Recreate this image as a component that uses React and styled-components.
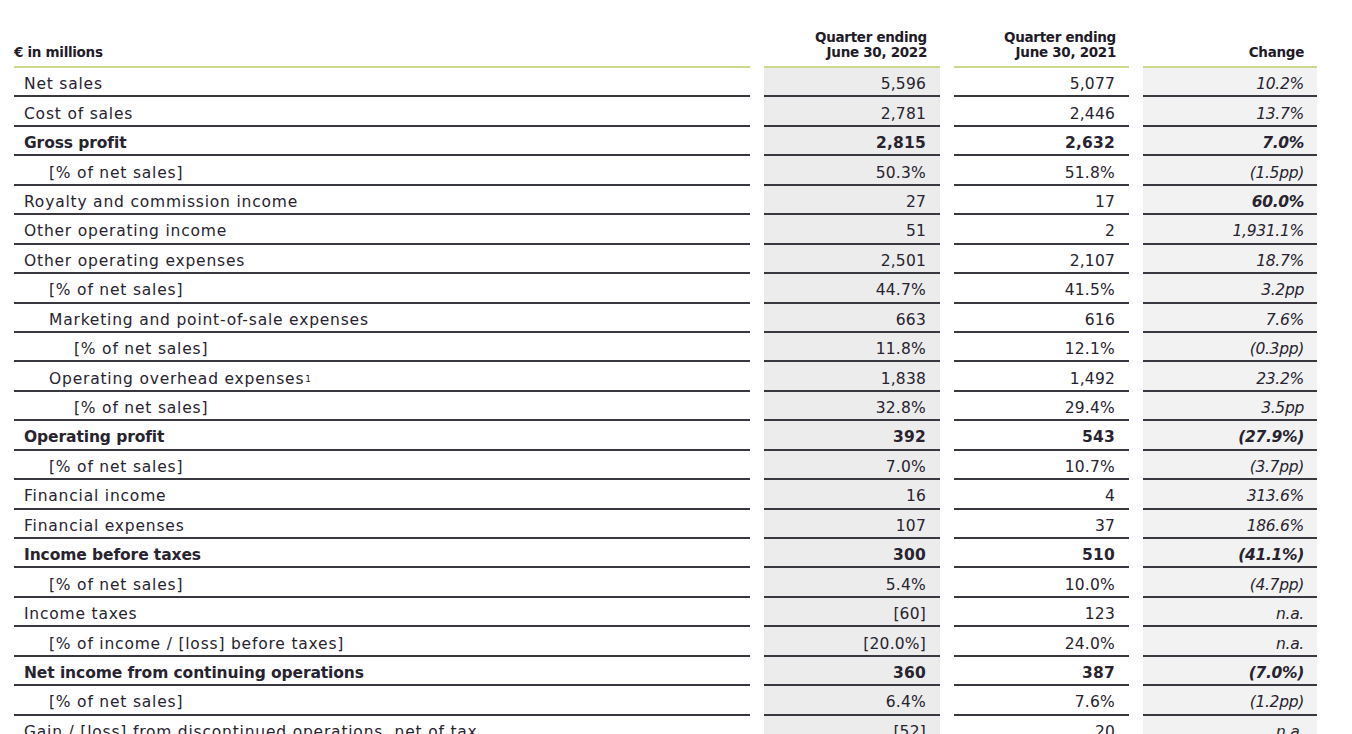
import React from "react";
import styled, { createGlobalStyle } from "styled-components";

const Global = createGlobalStyle`
  html, body { margin: 0; padding: 0; background: #ffffff; overflow: hidden; }
  body { font-family: "DejaVu Sans", "Liberation Sans", sans-serif; color: #27232f; }
`;

const COLS = "736px 176px 175px 174px";

const Page = styled.div`
  width: 1352px;
  padding-left: 14px;
  box-sizing: border-box;
`;

const HeaderRow = styled.div`
  display: grid;
  grid-template-columns: ${COLS};
  column-gap: 14px;
  height: 68px;
`;

const HeadCell = styled.div`
  display: flex;
  flex-direction: column;
  justify-content: flex-end;
  align-items: ${(p) => (p.$left ? "flex-start" : "flex-end")};
  text-align: ${(p) => (p.$left ? "left" : "right")};
  padding: 0 ${(p) => (p.$left ? "0" : "13px")} 6px 0;
  font-weight: 700;
  font-size: 13.5px;
  line-height: 15px;
  letter-spacing: -0.3px;
  color: #1f1b29;
  border-bottom: 2px solid #cfd98e;
  box-sizing: border-box;
`;

const Row = styled.div`
  display: grid;
  grid-template-columns: ${COLS};
  column-gap: 14px;
  height: 29.45px;
  font-weight: ${(p) => (p.$bold ? 700 : 400)};
`;

const Label = styled.div`
  display: flex;
  align-items: center;
  padding-top: 5px;
  padding-left: ${(p) => 10 + p.$indent * 25}px;
  font-size: 15.5px;
  letter-spacing: ${(p) => (p.$bold ? "-0.1px" : "0.8px")};
  border-bottom: 2px solid #3a3740;
  box-sizing: border-box;
  white-space: nowrap;
`;

const Value = styled.div`
  display: flex;
  align-items: center;
  justify-content: flex-end;
  padding-top: 5px;
  padding-right: ${(p) => (p.$change ? 13 : 14)}px;
  font-size: 15.5px;
  font-style: ${(p) => (p.$change ? "italic" : "normal")};
  font-weight: ${(p) => (p.$strong ? 700 : "inherit")};
  letter-spacing: ${(p) => (p.$change ? "-0.3px" : "0.2px")};
  background: ${(p) => p.$bg};
  border-bottom: 2px solid #3a3740;
  box-sizing: border-box;
  white-space: nowrap;
`;

const Sup = styled.sup`
  font-size: 9px;
  line-height: 0;
  vertical-align: 6px;
  margin-left: 1px;
`;

const rows = [
  { l: "Net sales", a: "5,596", b: "5,077", c: "10.2%" },
  { l: "Cost of sales", a: "2,781", b: "2,446", c: "13.7%" },
  { l: "Gross profit", a: "2,815", b: "2,632", c: "7.0%", bold: true },
  { l: "[% of net sales]", i: 1, a: "50.3%", b: "51.8%", c: "(1.5pp)" },
  { l: "Royalty and commission income", a: "27", b: "17", c: "60.0%", cs: true },
  { l: "Other operating income", a: "51", b: "2", c: "1,931.1%" },
  { l: "Other operating expenses", a: "2,501", b: "2,107", c: "18.7%" },
  { l: "[% of net sales]", i: 1, a: "44.7%", b: "41.5%", c: "3.2pp" },
  { l: "Marketing and point-of-sale expenses", i: 1, a: "663", b: "616", c: "7.6%" },
  { l: "[% of net sales]", i: 2, a: "11.8%", b: "12.1%", c: "(0.3pp)" },
  { l: "Operating overhead expenses", sup: "1", i: 1, a: "1,838", b: "1,492", c: "23.2%" },
  { l: "[% of net sales]", i: 2, a: "32.8%", b: "29.4%", c: "3.5pp" },
  { l: "Operating profit", a: "392", b: "543", c: "(27.9%)", bold: true },
  { l: "[% of net sales]", i: 1, a: "7.0%", b: "10.7%", c: "(3.7pp)" },
  { l: "Financial income", a: "16", b: "4", c: "313.6%" },
  { l: "Financial expenses", a: "107", b: "37", c: "186.6%" },
  { l: "Income before taxes", a: "300", b: "510", c: "(41.1%)", bold: true },
  { l: "[% of net sales]", i: 1, a: "5.4%", b: "10.0%", c: "(4.7pp)" },
  { l: "Income taxes", a: "[60]", b: "123", c: "n.a." },
  { l: "[% of income / [loss] before taxes]", i: 1, a: "[20.0%]", b: "24.0%", c: "n.a." },
  { l: "Net income from continuing operations", a: "360", b: "387", c: "(7.0%)", bold: true },
  { l: "[% of net sales]", i: 1, a: "6.4%", b: "7.6%", c: "(1.2pp)" },
  { l: "Gain / [loss] from discontinued operations, net of tax", a: "[52]", b: "20", c: "n.a." },
];

export default function App() {
  return (
    <Page>
      <Global />
      <HeaderRow>
        <HeadCell $left>€ in millions</HeadCell>
        <HeadCell>
          <span>Quarter ending</span>
          <span>June 30, 2022</span>
        </HeadCell>
        <HeadCell>
          <span>Quarter ending</span>
          <span>June 30, 2021</span>
        </HeadCell>
        <HeadCell>Change</HeadCell>
      </HeaderRow>
      {rows.map((r, k) => (
        <Row key={k} $bold={r.bold}>
          <Label $indent={r.i || 0} $bold={r.bold}>
            {r.l}
            {r.sup && <Sup>{r.sup}</Sup>}
          </Label>
          <Value $bg="#ececec">{r.a}</Value>
          <Value $bg="#ffffff">{r.b}</Value>
          <Value $bg="#f2f2f2" $change $strong={r.cs}>
            {r.c}
          </Value>
        </Row>
      ))}
    </Page>
  );
}
